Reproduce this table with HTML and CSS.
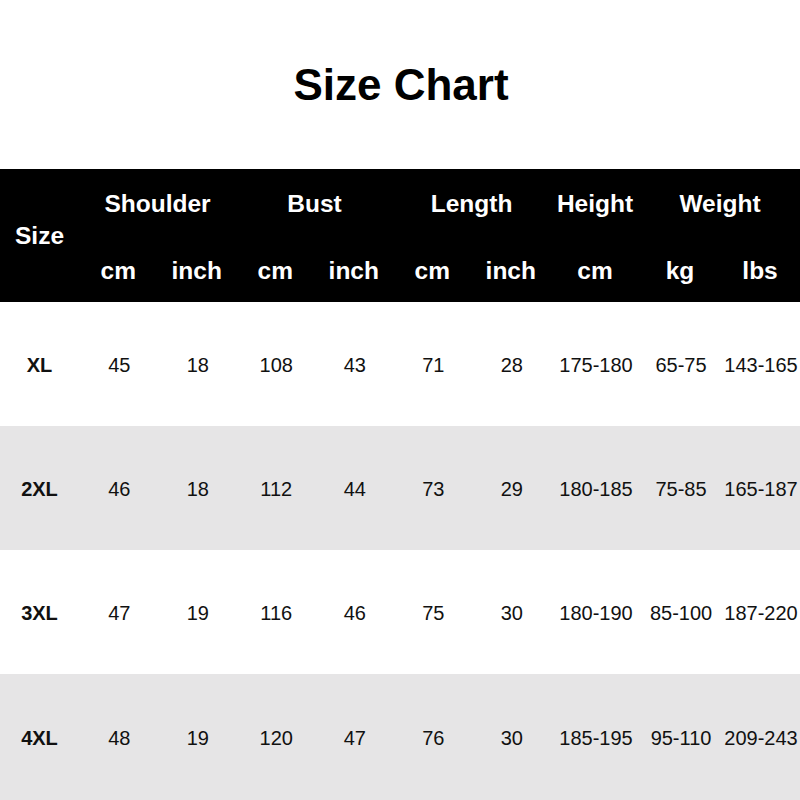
FILE: index.html
```html
<!DOCTYPE html>
<html lang="en">
<head>
<meta charset="utf-8">
<title>Size Chart</title>
<link rel="stylesheet" href="styles.css">
</head>
<body>
<header class="title-bar"><h1 class="title">Size Chart</h1></header>
<table class="chart">
  <colgroup>
    <col class="c-size"><col class="c-n"><col class="c-n"><col class="c-n"><col class="c-n"><col class="c-n"><col class="c-n"><col class="c-h"><col class="c-kg"><col class="c-lbs">
  </colgroup>
  <thead>
    <tr class="head-top">
      <th rowspan="2" class="size-head">Size</th>
      <th colspan="2">Shoulder</th>
      <th colspan="2">Bust</th>
      <th colspan="2">Length</th>
      <th>Height</th>
      <th colspan="2">Weight</th>
    </tr>
    <tr class="head-sub">
      <th>cm</th><th>inch</th><th>cm</th><th>inch</th><th>cm</th><th>inch</th><th>cm</th><th>kg</th><th>lbs</th>
    </tr>
  </thead>
  <tbody>
    <tr class="row">
      <th>XL</th><td>45</td><td>18</td><td>108</td><td>43</td><td>71</td><td>28</td><td>175-180</td><td>65-75</td><td>143-165</td>
    </tr>
    <tr class="row alt">
      <th>2XL</th><td>46</td><td>18</td><td>112</td><td>44</td><td>73</td><td>29</td><td>180-185</td><td>75-85</td><td>165-187</td>
    </tr>
    <tr class="row">
      <th>3XL</th><td>47</td><td>19</td><td>116</td><td>46</td><td>75</td><td>30</td><td>180-190</td><td>85-100</td><td>187-220</td>
    </tr>
    <tr class="row alt last">
      <th>4XL</th><td>48</td><td>19</td><td>120</td><td>47</td><td>76</td><td>30</td><td>185-195</td><td>95-110</td><td>209-243</td>
    </tr>
  </tbody>
</table>
</body>
</html>
```

FILE: styles.css
```css
html, body {
  margin: 0;
  padding: 0;
  background: #ffffff;
  font-family: "Liberation Sans", Arial, sans-serif;
  color: #111111;
}

.title-bar {
  height: 169px;
  display: flex;
  align-items: center;
  justify-content: center;
}

.title {
  margin: 0;
  font-size: 44px;
  font-weight: bold;
  color: #000000;
  line-height: 1.15;
  transform: translate(1px, 1px);
}

.chart {
  width: 800px;
  table-layout: fixed;
  border-collapse: collapse;
  border-spacing: 0;
}

.c-size { width: 79px; }
.c-n { width: 78.5px; }
.c-h { width: 90px; }
.c-kg { width: 80px; }
.c-lbs { width: 80px; }

.chart th, .chart td {
  box-sizing: border-box;
  padding: 0;
  text-align: center;
  vertical-align: middle;
  white-space: nowrap;
}

.chart thead {
  background: #000000;
  color: #ffffff;
}

.chart thead th {
  font-size: 24.5px;
  font-weight: bold;
}

.size-head { padding-top: 4px; }

.head-top th { height: 70px; }
.head-sub th { height: 63px; }

.row th, .row td {
  height: 124px;
  font-size: 20px;
  padding-top: 2px;
}

.row td { padding-left: 2px; }

.row th { font-weight: bold; }
.row td { font-weight: normal; }

.row.alt { background: #e6e5e6; }
.row.last th, .row.last td { height: 126px; }
```
